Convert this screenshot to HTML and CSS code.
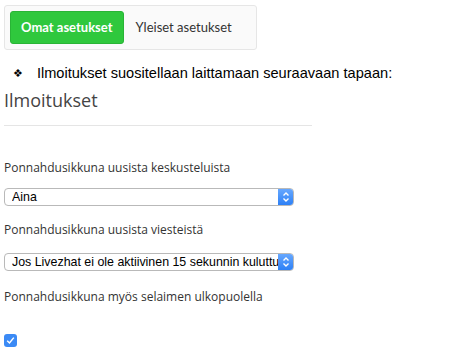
FILE: index.html
```html
<!DOCTYPE html>
<html lang="fi">
<head>
    <meta charset="UTF-8">
    <title>Asetukset</title>
    <link rel="stylesheet" href="styles.css">
</head>
<body>
    <div class="page">
        <!-- Tabs -->
        <div class="tabs">
            <a class="tab active">Omat asetukset</a>
            <a class="tab">Yleiset asetukset</a>
        </div>

        <p class="notice"><span class="mark">❖</span>Ilmoitukset suositellaan laittamaan seuraavaan tapaan:</p>

        <h3 class="section-title">Ilmoitukset</h3>
        <hr class="divider">

        <!-- Notification settings -->
        <div class="field field-first">
            <label class="field-label">Ponnahdusikkuna uusista keskusteluista</label>
            <div class="select">
                <select>
                    <option>Aina</option>
                </select>
                <span class="stepper">
                    <svg width="8" height="12" viewBox="0 0 8 12"><path d="M1.5 4.5 L4 2 L6.5 4.5 M1.5 7.5 L4 10 L6.5 7.5" fill="none" stroke="#fff" stroke-width="1.4"/></svg>
                </span>
            </div>
        </div>

        <div class="field field-second">
            <label class="field-label">Ponnahdusikkuna uusista viesteistä</label>
            <div class="select">
                <select>
                    <option>Jos Livezhat ei ole aktiivinen 15 sekunnin kuluttua</option>
                </select>
                <span class="stepper">
                    <svg width="8" height="12" viewBox="0 0 8 12"><path d="M1.5 4.5 L4 2 L6.5 4.5 M1.5 7.5 L4 10 L6.5 7.5" fill="none" stroke="#fff" stroke-width="1.4"/></svg>
                </span>
            </div>
        </div>

        <div class="field field-third">
            <label class="field-label">Ponnahdusikkuna myös selaimen ulkopuolella</label>
            <span class="checkbox">
                <svg width="13" height="13" viewBox="0 0 13 13"><path d="M3.2 6.8 L5.5 9 L9.8 3.6" fill="none" stroke="#fff" stroke-width="1.5"/></svg>
            </span>
        </div>
    </div>
</body>
</html>
```

FILE: styles.css
```css
body {
    margin: 0;
    font-family: "Open Sans", sans-serif;
    color: #333;
    background: #fff;
}

.page {
    width: 308px;
    padding: 5px 4px;
}

/* Tabs */
.tabs {
    display: inline-flex;
    align-items: center;
    padding: 5px;
    background: #fafafa;
    border: 1px solid #e6e6e6;
    border-radius: 3px;
    white-space: nowrap;
}

.tab {
    font-family: Lato, "Open Sans", sans-serif;
    font-size: 13px;
    line-height: 31px;
    padding: 0 18px 0 11px;
    color: #333;
    border: 1px solid transparent;
    border-radius: 3px;
}

.tab.active {
    background: #2fc83d;
    border-color: #29b436;
    color: #fff;
    font-weight: bold;
    padding: 0 10px;
}

.notice {
    display: flex;
    align-items: center;
    margin: 15px 0 0 0;
    font-family: "Liberation Sans", Arial, sans-serif;
    font-size: 14.6px;
    color: #000;
    white-space: nowrap;
}

.notice .mark {
    font-family: "DejaVu Sans", sans-serif;
    font-size: 11px;
    margin: 0 14px 0 9px;
}

.section-title {
    margin: 9px 0 0 0;
    font-size: 18px;
    font-weight: normal;
    line-height: 20px;
    color: #444;
}

.divider {
    margin: 15px 0 0 0;
    border: none;
    border-top: 1px solid #e5e5e5;
}

.field-label {
    display: block;
    font-size: 12px;
    line-height: 20px;
}

.field-first {
    margin-top: 32px;
}

.field-second {
    margin-top: 14px;
}

.field-third {
    margin-top: 16px;
}

.select {
    display: flex;
    width: 290px;
    height: 18px;
    margin-top: 10px;
    box-sizing: border-box;
    border: 1px solid #b9b9b9;
    border-radius: 4px;
    background: #fff;
    overflow: hidden;
}

.field-second .select {
    margin-top: 13px;
}

.select select {
    flex: 1;
    min-width: 0;
    appearance: none;
    -webkit-appearance: none;
    border: none;
    background: transparent;
    padding: 0 0 0 7px;
    margin: 0;
    font-family: "Liberation Sans", Arial, sans-serif;
    font-size: 12.4px;
    color: #000;
    outline: none;
}

.stepper {
    display: flex;
    align-items: center;
    justify-content: center;
    width: 16px;
    margin: -1px -1px -1px 0;
    background: linear-gradient(#6aaaff, #2a7ef5);
    border-radius: 0 4px 4px 0;
}

.checkbox {
    display: flex;
    width: 13px;
    height: 13px;
    margin-top: 27px;
    background: #3b8af5;
    border-radius: 3px;
}
```
